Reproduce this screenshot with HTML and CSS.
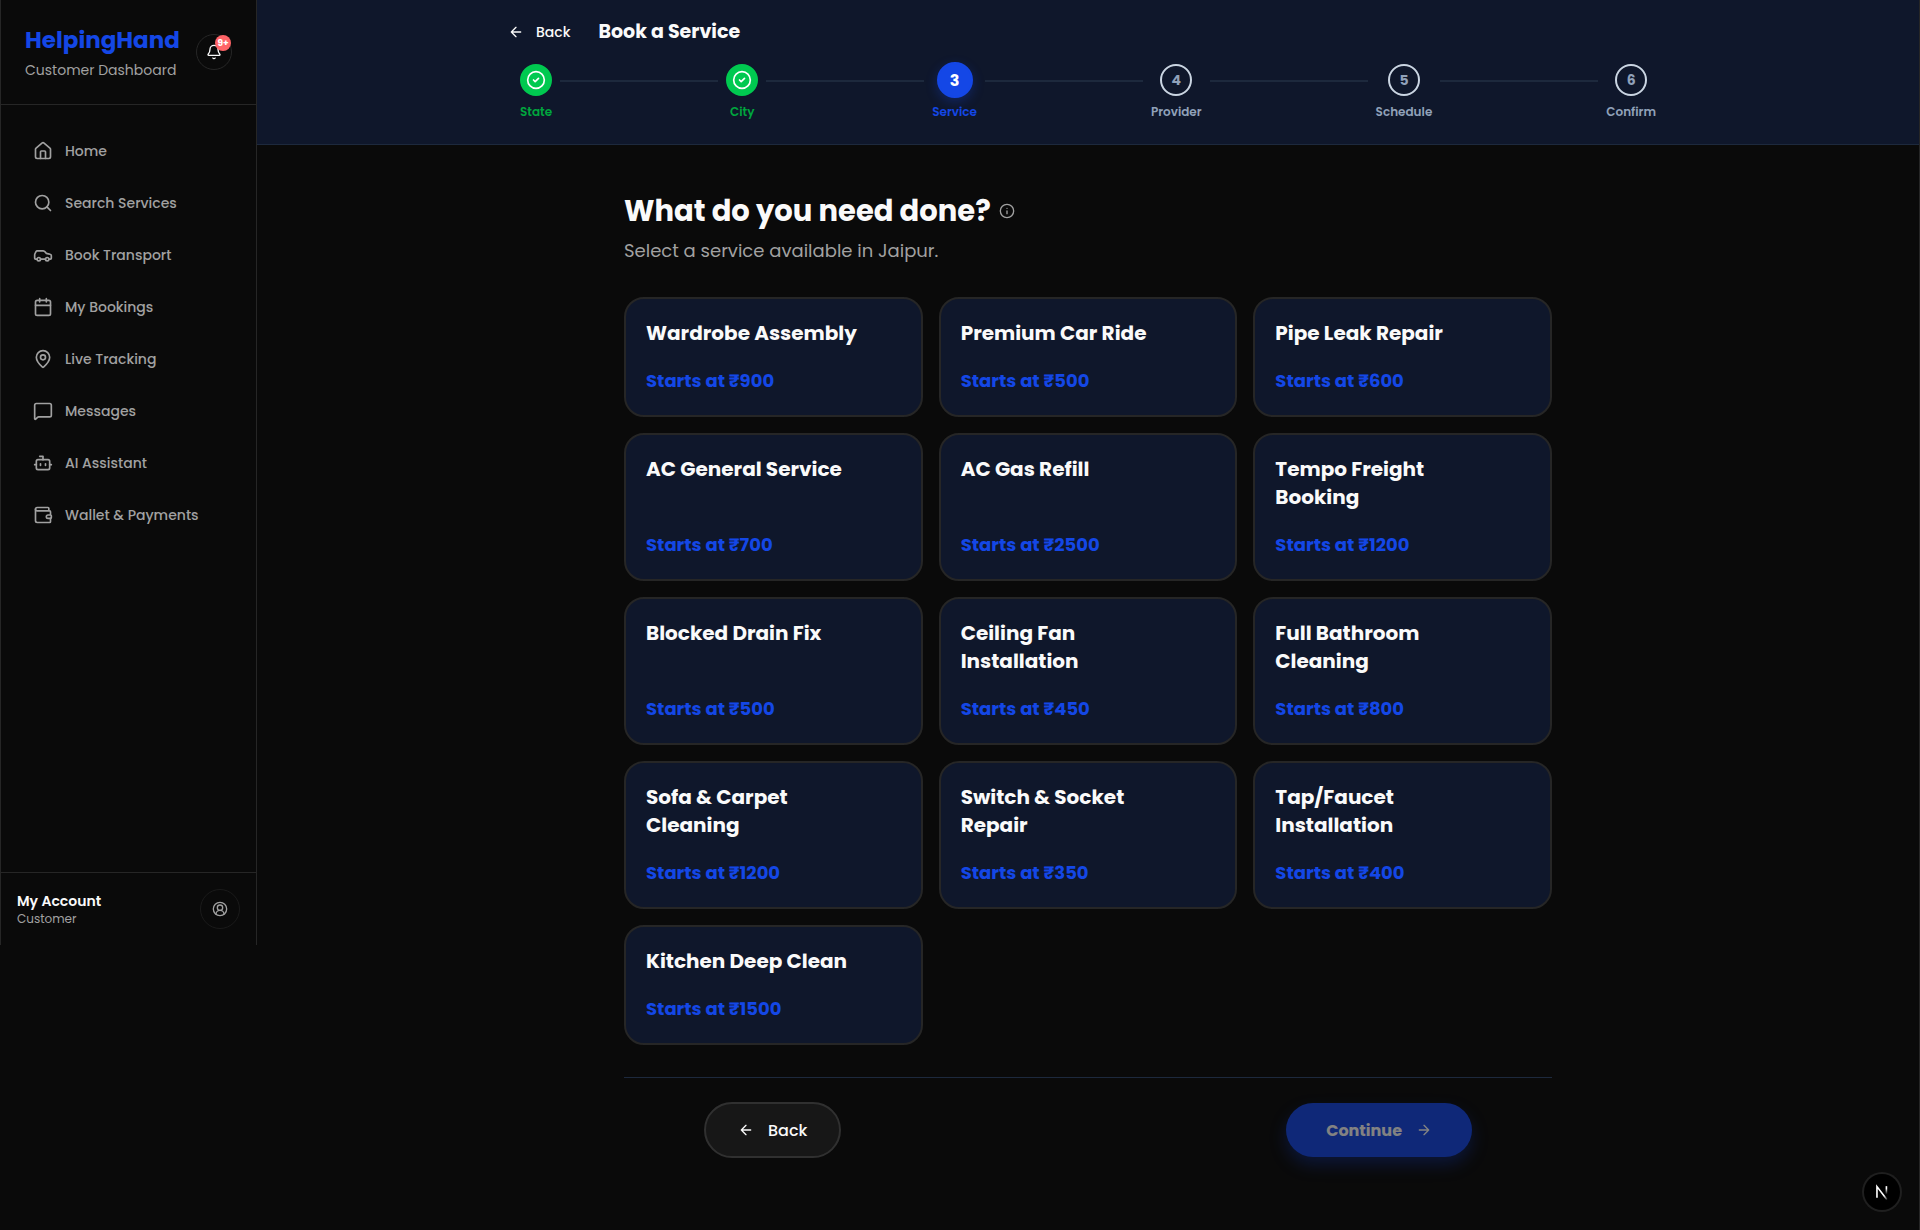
FILE: index.html
```html
<!DOCTYPE html>
<html lang="en">
<head>
    <meta charset="UTF-8">
    <meta name="viewport" content="width=device-width, initial-scale=1.0">
    <title>Book a Service - HelpingHand</title>
    <link rel="stylesheet" href="styles.css">
</head>
<body>

<div class="layout">
    <aside class="sidebar">
        <div class="sidebar-header">
            <div>
                <div class="brand">HelpingHand</div>
                <p class="brand-sub">Customer Dashboard</p>
            </div>
            <button type="button" class="bell-btn" aria-label="Notifications">
                <svg class="icon" viewBox="0 0 24 24"><path d="M10.268 21a2 2 0 0 0 3.464 0"/><path d="M3.262 15.326A1 1 0 0 0 4 17h16a1 1 0 0 0 .74-1.673C19.41 13.956 18 12.499 18 8A6 6 0 0 0 6 8c0 4.499-1.411 5.956-2.738 7.326"/></svg>
                <span class="badge">9+</span>
            </button>
        </div>

        <nav class="nav">
            <a href="#"><svg class="icon" viewBox="0 0 24 24"><path d="M15 21v-8a1 1 0 0 0-1-1h-4a1 1 0 0 0-1 1v8"/><path d="M3 10a2 2 0 0 1 .709-1.528l7-5.999a2 2 0 0 1 2.582 0l7 5.999A2 2 0 0 1 21 10v9a2 2 0 0 1-2 2H5a2 2 0 0 1-2-2z"/></svg>Home</a>
            <a href="#"><svg class="icon" viewBox="0 0 24 24"><circle cx="11" cy="11" r="8"/><path d="m21 21-4.3-4.3"/></svg>Search Services</a>
            <a href="#"><svg class="icon" viewBox="0 0 24 24"><path d="M19 17h2c.6 0 1-.4 1-1v-3c0-.9-.7-1.7-1.5-1.9C18.7 10.6 16 10 16 10s-1.3-1.4-2.2-2.3c-.5-.4-1.1-.7-1.8-.7H5c-.6 0-1.1.4-1.4.9l-1.4 2.9A3.7 3.7 0 0 0 2 12v4c0 .6.4 1 1 1h2"/><circle cx="7" cy="17" r="2"/><path d="M9 17h6"/><circle cx="17" cy="17" r="2"/></svg>Book Transport</a>
            <a href="#"><svg class="icon" viewBox="0 0 24 24"><path d="M8 2v4M16 2v4"/><rect width="18" height="18" x="3" y="4" rx="2"/><path d="M3 10h18"/></svg>My Bookings</a>
            <a href="#"><svg class="icon" viewBox="0 0 24 24"><path d="M20 10c0 4.993-5.539 10.193-7.399 11.799a1 1 0 0 1-1.202 0C9.539 20.193 4 14.993 4 10a8 8 0 0 1 16 0"/><circle cx="12" cy="10" r="3"/></svg>Live Tracking</a>
            <a href="#"><svg class="icon" viewBox="0 0 24 24"><path d="M22 17a2 2 0 0 1-2 2H6.828a2 2 0 0 0-1.414.586l-2.202 2.202A.71.71 0 0 1 2 21.286V5a2 2 0 0 1 2-2h16a2 2 0 0 1 2 2z"/></svg>Messages</a>
            <a href="#"><svg class="icon" viewBox="0 0 24 24"><path d="M12 8V4H8"/><rect width="16" height="12" x="4" y="8" rx="2"/><path d="M2 14h2M20 14h2M15 13v2M9 13v2"/></svg>AI Assistant</a>
            <a href="#"><svg class="icon" viewBox="0 0 24 24"><path d="M19 7V4a1 1 0 0 0-1-1H5a2 2 0 0 0 0 4h15a1 1 0 0 1 1 1v4h-3a2 2 0 0 0 0 4h3a1 1 0 0 0 1-1v-2a1 1 0 0 0-1-1"/><path d="M3 5v14a2 2 0 0 0 2 2h15a1 1 0 0 0 1-1v-4"/></svg>Wallet &amp; Payments</a>
        </nav>

        <div class="account">
            <div>
                <p class="account-name">My Account</p>
                <p class="account-role">Customer</p>
            </div>
            <button type="button" class="account-btn" aria-label="Profile">
                <svg class="icon" viewBox="0 0 24 24"><path d="M18 20a6 6 0 0 0-12 0"/><circle cx="12" cy="10" r="4"/><circle cx="12" cy="12" r="10"/></svg>
            </button>
        </div>
    </aside>

    <main class="main">
        <header class="topbar">
            <div class="topbar-inner">
                <div class="title-row">
                    <button type="button" class="back-link">
                        <svg class="icon" viewBox="0 0 24 24"><path d="m12 19-7-7 7-7M19 12H5"/></svg>
                        Back
                    </button>
                    <h1>Book a Service</h1>
                </div>
                <ol class="steps">
                    <li class="step done">
                        <span class="dot"><svg class="icon" viewBox="0 0 24 24"><circle cx="12" cy="12" r="10"/><path d="m9 12 2 2 4-4"/></svg></span>
                        <span class="step-label">State</span>
                    </li>
                    <li class="line"></li>
                    <li class="step done">
                        <span class="dot"><svg class="icon" viewBox="0 0 24 24"><circle cx="12" cy="12" r="10"/><path d="m9 12 2 2 4-4"/></svg></span>
                        <span class="step-label">City</span>
                    </li>
                    <li class="line"></li>
                    <li class="step current">
                        <span class="dot">3</span>
                        <span class="step-label">Service</span>
                    </li>
                    <li class="line"></li>
                    <li class="step">
                        <span class="dot">4</span>
                        <span class="step-label">Provider</span>
                    </li>
                    <li class="line"></li>
                    <li class="step">
                        <span class="dot">5</span>
                        <span class="step-label">Schedule</span>
                    </li>
                    <li class="line"></li>
                    <li class="step">
                        <span class="dot">6</span>
                        <span class="step-label">Confirm</span>
                    </li>
                </ol>
            </div>
        </header>

        <section class="content">
            <div class="heading">
                <h2>What do you need done?</h2>
                <svg class="icon" viewBox="0 0 24 24"><circle cx="12" cy="12" r="10"/><path d="M12 16v-4M12 8h.01"/></svg>
            </div>
            <p class="subtitle">Select a service available in Jaipur.</p>

            <div class="cards">
                <button type="button" class="card"><span class="card-title">Wardrobe Assembly</span><span class="price">Starts at ₹900</span></button>
                <button type="button" class="card"><span class="card-title">Premium Car Ride</span><span class="price">Starts at ₹500</span></button>
                <button type="button" class="card"><span class="card-title">Pipe Leak Repair</span><span class="price">Starts at ₹600</span></button>
                <button type="button" class="card"><span class="card-title">AC General Service</span><span class="price">Starts at ₹700</span></button>
                <button type="button" class="card"><span class="card-title">AC Gas Refill</span><span class="price">Starts at ₹2500</span></button>
                <button type="button" class="card"><span class="card-title">Tempo Freight Booking</span><span class="price">Starts at ₹1200</span></button>
                <button type="button" class="card"><span class="card-title">Blocked Drain Fix</span><span class="price">Starts at ₹500</span></button>
                <button type="button" class="card"><span class="card-title">Ceiling Fan Installation</span><span class="price">Starts at ₹450</span></button>
                <button type="button" class="card"><span class="card-title">Full Bathroom Cleaning</span><span class="price">Starts at ₹800</span></button>
                <button type="button" class="card"><span class="card-title">Sofa &amp; Carpet Cleaning</span><span class="price">Starts at ₹1200</span></button>
                <button type="button" class="card"><span class="card-title">Switch &amp; Socket Repair</span><span class="price">Starts at ₹350</span></button>
                <button type="button" class="card"><span class="card-title">Tap/Faucet Installation</span><span class="price">Starts at ₹400</span></button>
                <button type="button" class="card"><span class="card-title">Kitchen Deep Clean</span><span class="price">Starts at ₹1500</span></button>
            </div>

            <div class="actions">
                <button type="button" class="btn btn-back">
                    <svg class="icon" viewBox="0 0 24 24"><path d="m12 19-7-7 7-7M19 12H5"/></svg>
                    Back
                </button>
                <button type="button" class="btn btn-continue" disabled>
                    Continue
                    <svg class="icon" viewBox="0 0 24 24"><path d="M5 12h14M12 5l7 7-7 7"/></svg>
                </button>
            </div>
        </section>
    </main>
</div>

<button type="button" class="dev-badge" aria-label="Open dev tools">
    <svg viewBox="0 0 40 40">
        <defs>
            <linearGradient id="fadeDown" x1="0" y1="0" x2="0" y2="1"><stop offset="0.3" stop-color="#fff"/><stop offset="1" stop-color="#fff" stop-opacity="0"/></linearGradient>
            <linearGradient id="fadeTail" x1="0" y1="0" x2="1" y2="1"><stop offset="0.7" stop-color="#fff"/><stop offset="1" stop-color="#fff" stop-opacity="0.2"/></linearGradient>
        </defs>
        <path d="M14.4 26.5V14L25.4 28.4" fill="none" stroke="url(#fadeTail)" stroke-width="1.8"/>
        <rect x="24" y="13.5" width="1.8" height="9" fill="url(#fadeDown)"/>
    </svg>
</button>

</body>
</html>
```

FILE: styles.css
```css
* {
    box-sizing: border-box;
    margin: 0;
    padding: 0;
}
body {
    font-family: Poppins, Inter, sans-serif;
    background-color: #0a0a0a;
    color: #fafafa;
}
button {
    font-family: inherit;
    color: inherit;
    background: none;
    border: none;
    cursor: pointer;
}
.icon {
    width: 16px;
    height: 16px;
    flex-shrink: 0;
    fill: none;
    stroke: currentColor;
    stroke-width: 2;
    stroke-linecap: round;
    stroke-linejoin: round;
}
.layout {
    display: flex;
    align-items: flex-start;
    min-height: 100vh;
    border-right: 1px solid #262626;
}

/* sidebar */
.sidebar {
    position: sticky;
    top: 0;
    width: 257px;
    min-height: 945px;
    flex-shrink: 0;
    display: flex;
    flex-direction: column;
    border-left: 1px solid #262626;
    border-right: 1px solid #262626;
}
.sidebar-header {
    display: flex;
    align-items: center;
    justify-content: space-between;
    padding: 24px;
    height: 105px;
    border-bottom: 1px solid #262626;
}
.brand {
    font-size: 23px;
    font-weight: 700;
    line-height: 32px;
    color: #1447e6;
}
.brand-sub {
    font-size: 14px;
    line-height: 20px;
    margin-top: 4px;
    color: #a1a1a1;
}
.bell-btn {
    position: relative;
    width: 36px;
    height: 36px;
    display: flex;
    align-items: center;
    justify-content: center;
    border: 1px solid #262626;
    border-radius: 50%;
}
.badge {
    position: absolute;
    top: 0;
    right: 0;
    width: 16px;
    height: 16px;
    border-radius: 50%;
    background-color: #ff6467;
    color: #fff;
    font-size: 9px;
    font-weight: 700;
    line-height: 16px;
    text-align: center;
}
.nav {
    flex: 1;
    display: flex;
    flex-direction: column;
    gap: 8px;
    padding: 24px 16px;
}
.nav a {
    display: flex;
    align-items: center;
    gap: 12px;
    height: 44px;
    padding: 0 16px;
    font-size: 14px;
    font-weight: 500;
    color: #a1a1a1;
    text-decoration: none;
}
.nav .icon {
    width: 20px;
    height: 20px;
}
.account {
    display: flex;
    align-items: center;
    justify-content: space-between;
    padding: 16px;
    border-top: 1px solid #262626;
}
.account-name {
    font-size: 14px;
    font-weight: 600;
    line-height: 20px;
}
.account-role {
    font-size: 12px;
    line-height: 16px;
    color: #a1a1a1;
}
.account-btn {
    width: 40px;
    height: 40px;
    display: flex;
    align-items: center;
    justify-content: center;
    border: 1px solid #1a1a1a;
    border-radius: 50%;
    color: #a1a1a1;
}

/* top bar */
.main {
    flex: 1;
    min-width: 0;
}
.topbar {
    background-color: #0f172b;
    border-bottom: 1px solid #1d293d;
    padding: 16px 16px 22px;
}
.topbar-inner {
    max-width: 1168px;
    margin: 0 auto;
}
.title-row {
    display: flex;
    align-items: center;
    gap: 16px;
    height: 32px;
}
.back-link {
    display: flex;
    align-items: center;
    gap: 12px;
    height: 32px;
    padding: 0 12px 0 4px;
    font-size: 14px;
    font-weight: 500;
}
.title-row h1 {
    font-size: 19px;
    font-weight: 700;
    line-height: 28px;
}
.steps {
    display: flex;
    align-items: flex-start;
    list-style: none;
    margin-top: 14px;
    padding: 0 16px;
}
.step {
    display: flex;
    flex-direction: column;
    align-items: center;
    gap: 4px;
    min-width: 32px;
    color: #90a1b9;
}
.dot {
    width: 32px;
    height: 32px;
    margin: 2px 0;
    display: flex;
    align-items: center;
    justify-content: center;
    border: 2px solid #cad5e2;
    border-radius: 50%;
    font-size: 14px;
    font-weight: 700;
}
.step-label {
    font-size: 12px;
    font-weight: 600;
    line-height: 20px;
}
.done {
    color: #00a63e;
}
.done .dot {
    background-color: #00c950;
    border-color: #00c950;
    color: #fff;
}
.done .icon {
    width: 20px;
    height: 20px;
}
.current {
    color: #1447e6;
}
.current .dot {
    width: 36px;
    height: 36px;
    margin: 0;
    background-color: #1447e6;
    border-color: #1447e6;
    color: #fff;
    font-size: 16px;
    box-shadow: 0 4px 12px rgba(20, 71, 230, 0.3);
}
.line {
    flex: 1;
    height: 2px;
    margin: 18px 8px 0;
    background-color: #1d293d;
}

/* service picker */
.content {
    max-width: 960px;
    margin: 0 auto;
    padding: 48px 16px;
}
.heading {
    display: flex;
    align-items: center;
    gap: 8px;
}
.heading h2 {
    font-size: 29px;
    font-weight: 700;
    line-height: 36px;
}
.heading .icon {
    color: #a1a1a1;
}
.subtitle {
    margin-top: 8px;
    font-size: 18px;
    line-height: 28px;
    color: #a1a1a1;
}
.cards {
    display: grid;
    grid-template-columns: repeat(3, 1fr);
    gap: 16px;
    margin-top: 32px;
}
.card {
    display: flex;
    flex-direction: column;
    justify-content: space-between;
    gap: 20px;
    padding: 20px;
    border: 2px solid #262626;
    border-radius: 20px;
    background-color: #0f172b;
    text-align: left;
    line-height: 28px;
}
.card-title {
    padding-right: 32px;
    font-size: 20px;
    font-weight: 700;
}
.price {
    font-size: 18px;
    font-weight: 700;
    color: #1447e6;
}
.actions {
    display: flex;
    align-items: center;
    justify-content: space-between;
    margin-top: 32px;
    padding: 24px 80px;
    border-top: 1px solid #1d293d;
}
.btn {
    display: flex;
    align-items: center;
    gap: 14px;
    border-radius: 28px;
    font-size: 16px;
}
.btn-back {
    height: 56px;
    padding: 0 32px;
    border: 2px solid #303030;
    background-color: #171717;
    font-weight: 500;
}
.btn-continue {
    height: 54px;
    padding: 0 40px;
    background-color: #1447e6;
    font-weight: 700;
    opacity: 0.5;
    box-shadow: 0 8px 16px rgba(20, 71, 230, 0.4);
}
.dev-badge {
    position: fixed;
    right: 20px;
    bottom: 20px;
    width: 36px;
    height: 36px;
    border-radius: 50%;
    background-color: #000;
    box-shadow: 0 0 0 2px #1f1f1f;
}
```
